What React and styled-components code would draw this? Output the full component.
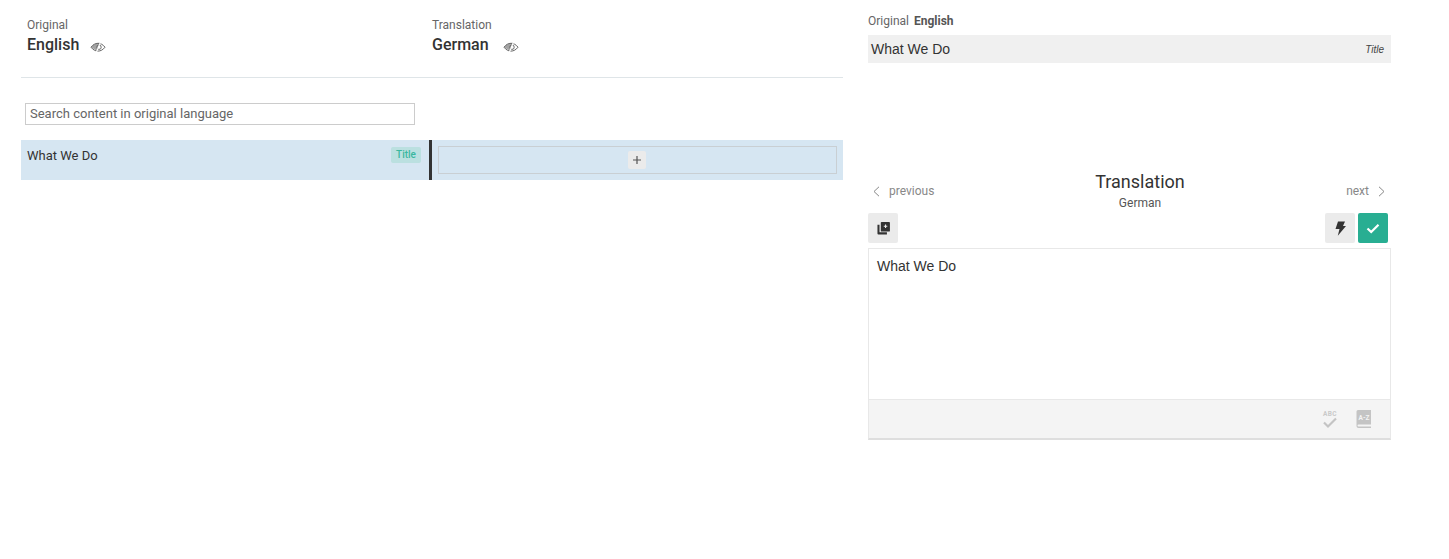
import React from "react";
import styled, { createGlobalStyle } from "styled-components";

const Global = createGlobalStyle`
  html, body { margin: 0; padding: 0; background: #fff; }
  body { font-family: Roboto, "Liberation Sans", sans-serif; color: #333; }
`;

const Page = styled.div`
  display: flex;
  align-items: flex-start;
  gap: 25px;
  padding-left: 21px;
  width: 1449px;
  height: 559px;
  box-sizing: border-box;
  overflow: hidden;
`;

const LeftPanel = styled.section`
  width: 822px;
  flex: none;
`;

const Header = styled.header`
  display: flex;
  height: 78px;
  box-sizing: border-box;
  border-bottom: 1px solid #dfe5e8;
  padding-top: 18px;
`;

const LangColumn = styled.div`
  width: ${(p) => p.$width}px;
  padding-left: 6px;
  box-sizing: border-box;
`;

const LangLabel = styled.div`
  font-size: 12px;
  line-height: 14px;
  color: #666;
`;

const LangRow = styled.div`
  display: flex;
  align-items: center;
  margin-top: 3px;
  height: 20px;
`;

const LangName = styled.div`
  font-size: 16px;
  font-weight: 500;
  line-height: 20px;
  color: #333;
`;

const EyeButton = styled.span`
  display: inline-flex;
  margin-left: ${(p) => (p.$wide ? 14 : 11)}px;
  margin-top: 3px;
  color: #666;
`;

const SearchWrap = styled.div`
  padding: 25px 0 15px 4px;
`;

const SearchInput = styled.input`
  display: block;
  width: 390px;
  height: 22px;
  box-sizing: border-box;
  border: 1px solid #ccc;
  padding: 0 4px 2px;
  font: 400 13px/18px Roboto, sans-serif;
  color: #333;
  outline: none;
  &::placeholder { color: #666; opacity: 1; }
`;

const SegmentRow = styled.div`
  display: flex;
  height: 40px;
  background: #d6e6f2;
`;

const SourceCell = styled.div`
  width: 408px;
  box-sizing: border-box;
  display: flex;
  justify-content: space-between;
  align-items: flex-start;
  padding: 7px 8px 0 6px;
  font-size: 13px;
  line-height: 17px;
  color: #333;
`;

const Tag = styled.span`
  display: block;
  height: 16px;
  width: 30px;
  background: #bbe0e0;
  border-radius: 2px;
  color: #3ab79f;
  font-size: 10px;
  font-weight: 500;
  line-height: 15px;
  text-align: center;
`;

const Divider = styled.div`
  width: 3px;
  background: #333;
  flex: none;
`;

const TargetCell = styled.div`
  flex: 1;
  padding: 6px;
  display: flex;
`;

const TargetBox = styled.div`
  flex: 1;
  border: 1px solid #c9cfd3;
  display: flex;
  align-items: center;
  justify-content: center;
  padding-right: 2px;
`;

const AddButton = styled.button`
  width: 18px;
  height: 18px;
  padding: 0;
  border: 0;
  border-radius: 2px;
  background: #ebebeb;
  color: #555;
  display: flex;
  align-items: center;
  justify-content: center;
`;

const RightPanel = styled.section`
  width: 523px;
  flex: none;
  padding-top: 14px;
`;

const OriginalLine = styled.div`
  display: flex;
  gap: 5px;
  font-size: 12px;
  line-height: 14px;
  color: #666;
  height: 21px;
`;

const Strong = styled.strong`
  font-weight: 700;
  color: #555;
`;

const OriginalBox = styled.div`
  height: 28px;
  background: #f0f0f0;
  display: flex;
  align-items: center;
  justify-content: space-between;
  padding: 0 7px 0 3px;
  font-family: "Liberation Sans", Arial, sans-serif;
  font-size: 14px;
  color: #333;
`;

const OriginalType = styled.span`
  font-size: 10px;
  font-style: italic;
  color: #444;
`;

const NavBar = styled.div`
  display: grid;
  grid-template-columns: 1fr auto 1fr;
  align-items: start;
  margin-top: 109px;
  height: 41px;
`;

const NavLink = styled.div`
  display: flex;
  align-items: center;
  justify-content: ${(p) => (p.$end ? "flex-end" : "flex-start")};
  gap: 9px;
  height: 16px;
  margin-top: 11px;
  padding: ${(p) => (p.$end ? "0 6px 0 0" : "0 0 0 5px")};
  font-size: 12px;
  color: #888;
`;

const TitleBlock = styled.div`
  text-align: center;
  padding-left: 21px;
`;

const TranslationTitle = styled.div`
  font-size: 18px;
  line-height: 20px;
  color: #333;
`;

const Subtitle = styled.div`
  font-size: 12px;
  line-height: 14px;
  margin-top: 4px;
  color: #555;
`;

const Toolbar = styled.div`
  display: flex;
  justify-content: space-between;
  padding-right: 3px;
`;

const ToolGroup = styled.div`
  display: flex;
  gap: 3px;
`;

const ToolButton = styled.button`
  width: 30px;
  height: 30px;
  padding: 0;
  border: 0;
  border-radius: 2px;
  background: ${(p) => (p.$primary ? "#28ae92" : "#ebebeb")};
  color: ${(p) => (p.$primary ? "#fff" : "#333")};
  display: flex;
  align-items: center;
  justify-content: center;
`;

const EditorCard = styled.div`
  margin-top: 5px;
  border: 1px solid #e8e8e8;
  border-bottom: 2px solid #dedede;
  box-sizing: border-box;
  height: 192px;
  display: flex;
  flex-direction: column;
`;

const EditorText = styled.div`
  flex: 1;
  padding: 8px;
  font-family: "Liberation Sans", Arial, sans-serif;
  font-size: 14px;
  line-height: 18px;
  color: #333;
`;

const EditorFooter = styled.div`
  height: 38px;
  background: #f4f4f4;
  border-top: 1px solid #e8e8e8;
  display: flex;
  align-items: center;
  justify-content: flex-end;
  gap: 18px;
  padding-right: 18px;
`;

const Eye = () => (
  <svg width="16" height="12" viewBox="0 0 16 12" fill="none" stroke="currentColor" strokeWidth="1">
    <path d="M1 6.2C3 3.6 5.4 2.3 8 2.3s5 1.3 7 3.9c-2 2.6-4.4 3.900-7 3.900S3 8.800 1 6.200Z" />
    <path d="M1.2 6.200 3.400 3.800 9.800 1.600 7 10 Z" fill="currentColor" stroke="none" opacity=".6" />
    <circle cx="9" cy="6.200" r="2.200" />
    <path d="M10.600.8 6.400 11.200" stroke="#fff" strokeWidth="1.200" />
  </svg>
);

const Plus = () => (
  <svg width="8" height="8" viewBox="0 0 8 8" stroke="currentColor" strokeWidth="1.200">
    <path d="M4 0v8M0 4h8" />
  </svg>
);

const Chevron = ({ right }) => (
  <svg width="7" height="11" viewBox="0 0 7 11" fill="none" stroke="#888" strokeWidth="1">
    <path d={right ? "M1 .8 6 5.500 1 10.200" : "M6 .8 1 5.500 6 10.200"} />
  </svg>
);

const CopyIcon = () => (
  <svg width="13" height="14" viewBox="0 0 14 14" fill="currentColor">
    <path d="M.5 3.500h2.200v8h8V14H1.500a1 1 0 0 1-1-1Z" />
    <path d="M5 .5h8a.9.9 0 0 1 .9.900V10a.9.9 0 0 1-.9.900H5a.9.9 0 0 1-.9-.900V1.400A.9.9 0 0 1 5 .5Z" />
    <path d="M8.600 3.200h1.200v1.300h1.300v1.200H9.800V7H8.600V5.700H7.300V4.500h1.300Z" fill="#ebebeb" />
  </svg>
);

const Bolt = () => (
  <svg width="11" height="15" viewBox="0 0 11 15" fill="currentColor">
    <path d="M3 .5h7L8 5h3L2.800 14.800 4.500 8H.5Z" />
  </svg>
);

const Check = () => (
  <svg width="14" height="11" viewBox="0 0 14 11" fill="none" stroke="currentColor" strokeWidth="2.200">
    <path d="M1.500 5.500 5.200 9 12.500 1.800" />
  </svg>
);

const SpellIcon = () => (
  <svg width="16" height="19" viewBox="0 0 16 19">
    <text x="8" y="6" textAnchor="middle" fontFamily="Roboto, sans-serif" fontSize="6.500" fontWeight="700" letterSpacing=".4" fill="#c9c9c9">ABC</text>
    <path d="M2 12.500 6 16.500 14 8.500" fill="none" stroke="#c4c4c4" strokeWidth="2.200" />
  </svg>
);

const BookIcon = () => (
  <svg width="16" height="18" viewBox="0 0 16 18">
    <path d="M2 0h13v14.500H2.500a1 1 0 0 0 0 2H15V18H2.500A2 2 0 0 1 .5 16V1.500A1.500 1.500 0 0 1 2 0Z" fill="#c4c4c4" />
    <text x="8" y="9.500" textAnchor="middle" fontFamily="Roboto, sans-serif" fontSize="6.500" fontWeight="700" fill="#f4f4f4">A-Z</text>
  </svg>
);

export default function App() {
  return (
    <>
      <Global />
      <Page>
        <LeftPanel>
          <Header>
            <LangColumn $width={405}>
              <LangLabel>Original</LangLabel>
              <LangRow>
                <LangName>English</LangName>
                <EyeButton><Eye /></EyeButton>
              </LangRow>
            </LangColumn>
            <LangColumn $width={417}>
              <LangLabel>Translation</LangLabel>
              <LangRow>
                <LangName>German</LangName>
                <EyeButton $wide><Eye /></EyeButton>
              </LangRow>
            </LangColumn>
          </Header>
          <SearchWrap>
            <SearchInput placeholder="Search content in original language" />
          </SearchWrap>
          <SegmentRow>
            <SourceCell>
              <span>What We Do</span>
              <Tag>Title</Tag>
            </SourceCell>
            <Divider />
            <TargetCell>
              <TargetBox>
                <AddButton><Plus /></AddButton>
              </TargetBox>
            </TargetCell>
          </SegmentRow>
        </LeftPanel>
        <RightPanel>
          <OriginalLine>
            <span>Original</span>
            <Strong>English</Strong>
          </OriginalLine>
          <OriginalBox>
            <span>What We Do</span>
            <OriginalType>Title</OriginalType>
          </OriginalBox>
          <NavBar>
            <NavLink><Chevron /><span>previous</span></NavLink>
            <TitleBlock>
              <TranslationTitle>Translation</TranslationTitle>
              <Subtitle>German</Subtitle>
            </TitleBlock>
            <NavLink $end><span>next</span><Chevron right /></NavLink>
          </NavBar>
          <Toolbar>
            <ToolButton><CopyIcon /></ToolButton>
            <ToolGroup>
              <ToolButton><Bolt /></ToolButton>
              <ToolButton $primary><Check /></ToolButton>
            </ToolGroup>
          </Toolbar>
          <EditorCard>
            <EditorText>What We Do</EditorText>
            <EditorFooter>
              <SpellIcon />
              <BookIcon />
            </EditorFooter>
          </EditorCard>
        </RightPanel>
      </Page>
    </>
  );
}
